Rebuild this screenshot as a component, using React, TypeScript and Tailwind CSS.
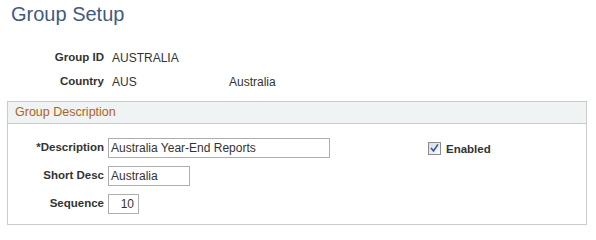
import React from "react";

function Check() {
  return (
    <span className="inline-flex w-[13px] h-[13px] border border-[#8c8c8c] bg-gradient-to-br from-[#dcdcdc] to-[#fafafa] items-center justify-center">
      <svg width="11" height="11" viewBox="0 0 11 11">
        <path d="M2.5 5.5 L4.5 8 L8.5 2" fill="none" stroke="#2f55b0" strokeWidth="1.6" strokeLinecap="square" />
      </svg>
    </span>
  );
}

export default function App() {
  return (
    <div className="w-[596px] h-[233px] bg-white font-['Liberation_Sans',Arial,sans-serif] text-[#333]">
      <h1 className="pl-[11px] pt-[2px] text-[20px] leading-[24px] font-normal text-[#405a85]">Group Setup</h1>
      <div className="mt-[20px]">
        <div className="flex h-[24px] items-center">
          <div className="w-[104px] text-right text-[11.5px] font-bold">Group ID</div>
          <div className="pl-[8px] text-[12px]">AUSTRALIA</div>
        </div>
        <div className="flex h-[24px] items-center">
          <div className="w-[104px] text-right text-[11.5px] font-bold">Country</div>
          <div className="w-[125px] pl-[8px] text-[12px]">AUS</div>
          <div className="text-[12px]">Australia</div>
        </div>
      </div>
      <div className="ml-[7px] mt-[7px] w-[580px] border border-[#cbcbcb]">
        <div className="h-[22px] bg-[#f0f3f4] border-b border-[#cbcbcb] pl-[7px] text-[12.5px] leading-[21px] text-[#b65e12]">
          Group Description
        </div>
        <div className="pt-[14px] pb-[10px] flex flex-col gap-[8px]">
          <div className="flex items-center h-[20px]">
            <div className="w-[96px] text-right text-[11.5px] font-bold">*Description</div>
            <div className="ml-[4px] w-[222px] h-[20px] border border-[#adadad] pl-[2px] text-[12px] leading-[18px]">Australia Year-End Reports</div>
            <div className="ml-[98px] flex items-center">
              <Check />
              <span className="ml-[5px] text-[11.5px] font-bold leading-[14px] mt-[2px]">Enabled</span>
            </div>
          </div>
          <div className="flex items-center h-[20px]">
            <div className="w-[96px] text-right text-[11.5px] font-bold">Short Desc</div>
            <div className="ml-[4px] w-[82px] h-[20px] border border-[#adadad] pl-[2px] text-[12px] leading-[18px]">Australia</div>
          </div>
          <div className="flex items-center h-[20px]">
            <div className="w-[96px] text-right text-[11.5px] font-bold">Sequence</div>
            <div className="ml-[4px] w-[31px] h-[20px] border border-[#adadad] pr-[4px] text-right text-[12px] leading-[18px]">10</div>
          </div>
        </div>
      </div>
    </div>
  );
}
